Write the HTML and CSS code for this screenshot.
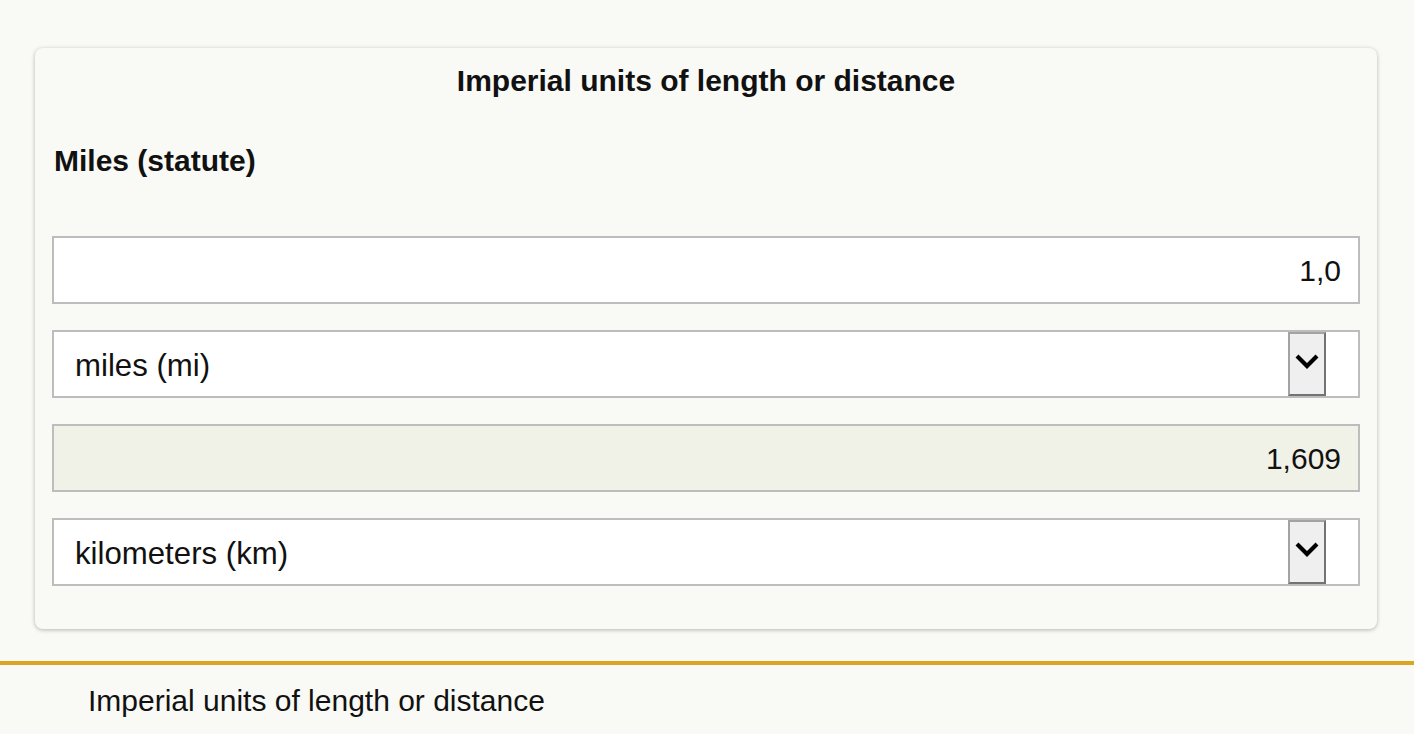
FILE: index.html
```html
<!DOCTYPE html>
<html lang="en">
<head>
<meta charset="utf-8">
<title>Imperial units of length or distance</title>
<link rel="stylesheet" href="styles.css">
</head>
<body>
<main class="page">
  <section class="card">
    <h1 class="card-title">Imperial units of length or distance</h1>
    <h2 class="label">Miles (statute)</h2>
    <div class="fields">
      <div class="field field-input"><span class="value">1,0</span></div>
      <div class="field field-select">
        <span class="select-text">miles (mi)</span>
        <span class="select-btn"><svg width="38" height="60" viewBox="0 0 38 60"><polyline points="9,22 19,32 29,22" fill="none" stroke="#000" stroke-width="4.2"/></svg></span>
      </div>
      <div class="field field-input field-result"><span class="value">1,609</span></div>
      <div class="field field-select">
        <span class="select-text">kilometers (km)</span>
        <span class="select-btn"><svg width="38" height="60" viewBox="0 0 38 60"><polyline points="9,22 19,32 29,22" fill="none" stroke="#000" stroke-width="4.2"/></svg></span>
      </div>
    </div>
  </section>
</main>
<footer class="footer">
  <p class="footer-text">Imperial units of length or distance</p>
</footer>
</body>
</html>
```
FILE: styles.css
```css
html, body {
  margin: 0;
  padding: 0;
  background: #f9f9f5;
  color: #111;
  font-family: "Liberation Sans", Arial, sans-serif;
}
.page {
  padding: 48px 37px 0 35px;
}
.card {
  background: #f9f9f5;
  border-radius: 8px;
  box-shadow: 0 1px 4px rgba(0, 0, 0, 0.28);
  padding: 16px 17px 43px;
}
.card-title {
  margin: 0 0 45px;
  font-size: 30px;
  line-height: 34.5px;
  font-weight: bold;
  text-align: center;
}
.label {
  margin: 0 0 58px 2px;
  font-size: 30px;
  line-height: 34.5px;
  font-weight: bold;
}
.fields {
  display: flex;
  flex-direction: column;
  gap: 26px;
}
.field {
  box-sizing: border-box;
  height: 68px;
  border: 2px solid #bdbdbd;
  background: #fff;
  display: flex;
  align-items: center;
}
.field-input {
  justify-content: flex-end;
  padding-right: 17px;
  font-size: 30px;
}
.value {
  padding-top: 1px;
}
.field-result {
  background: #f1f2e7;
}
.field-select {
  padding-left: 21px;
  padding-right: 32px;
  font-size: 31.2px;
}
.select-text {
  flex: 1;
  padding-top: 4px;
}
.select-btn {
  box-sizing: border-box;
  width: 38px;
  height: 64px;
  background: #efefef;
  border: 2px solid #a3a3a3;
  border-right-color: #737373;
  border-bottom-color: #737373;
  display: flex;
  align-items: center;
  justify-content: center;
}
.select-btn svg {
  display: block;
  flex: none;
}
.footer {
  margin-top: 32px;
  border-top: 4px solid #daa520;
  padding: 19px 0 20px 88px;
}
.footer-text {
  margin: 0;
  font-size: 30px;
  line-height: 34.5px;
}
```
